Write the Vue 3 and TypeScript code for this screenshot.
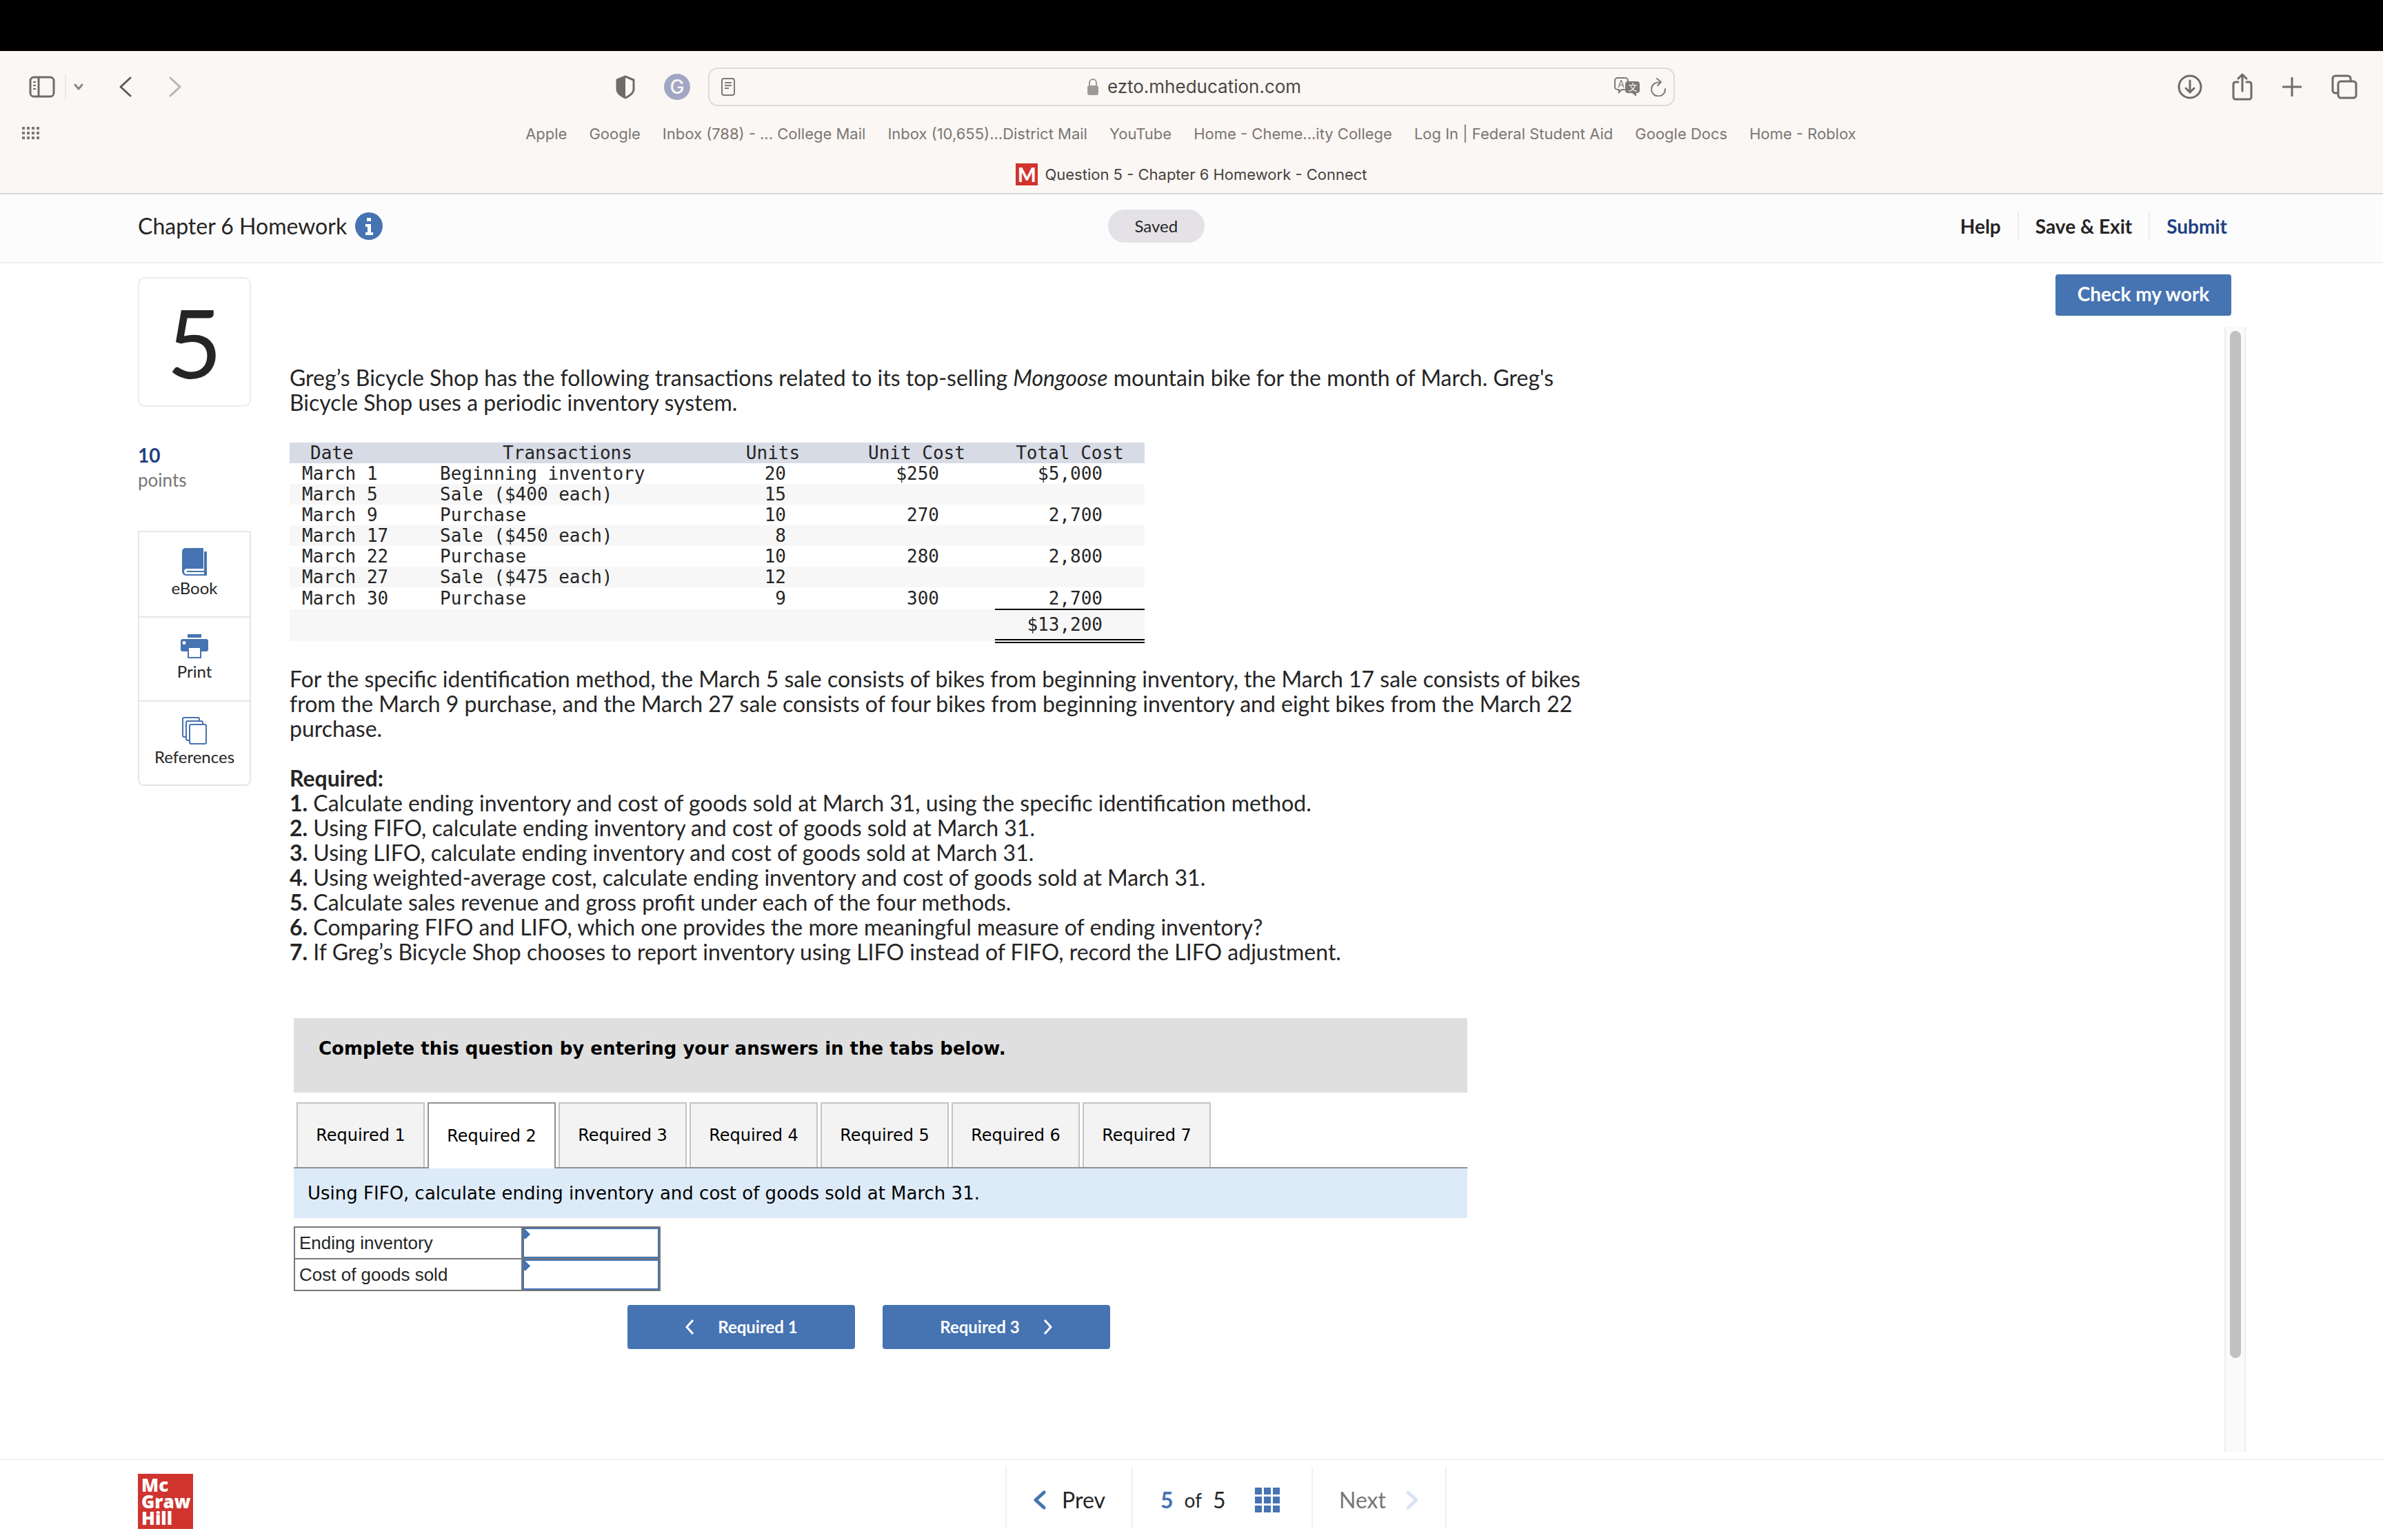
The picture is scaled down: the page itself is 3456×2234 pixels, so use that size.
<script setup lang="ts">
import { ref } from 'vue'

interface Transaction {
  date: string
  label: string
  units: string
  unitCost: string
  totalCost: string
}

const bookmarks: string[] = [
  'Apple',
  'Google',
  'Inbox (788) - ... College Mail',
  'Inbox (10,655)...District Mail',
  'YouTube',
  'Home - Cheme...ity College',
  'Log In | Federal Student Aid',
  'Google Docs',
  'Home - Roblox',
]

const transactions: Transaction[] = [
  { date: 'March 1', label: 'Beginning inventory', units: '20', unitCost: '$250', totalCost: '$5,000' },
  { date: 'March 5', label: 'Sale ($400 each)', units: '15', unitCost: '', totalCost: '' },
  { date: 'March 9', label: 'Purchase', units: '10', unitCost: '270', totalCost: '2,700' },
  { date: 'March 17', label: 'Sale ($450 each)', units: '8', unitCost: '', totalCost: '' },
  { date: 'March 22', label: 'Purchase', units: '10', unitCost: '280', totalCost: '2,800' },
  { date: 'March 27', label: 'Sale ($475 each)', units: '12', unitCost: '', totalCost: '' },
  { date: 'March 30', label: 'Purchase', units: '9', unitCost: '300', totalCost: '2,700' },
]

const requirements: string[] = [
  'Calculate ending inventory and cost of goods sold at March 31, using the specific identification method.',
  'Using FIFO, calculate ending inventory and cost of goods sold at March 31.',
  'Using LIFO, calculate ending inventory and cost of goods sold at March 31.',
  'Using weighted-average cost, calculate ending inventory and cost of goods sold at March 31.',
  'Calculate sales revenue and gross profit under each of the four methods.',
  'Comparing FIFO and LIFO, which one provides the more meaningful measure of ending inventory?',
  'If Greg’s Bicycle Shop chooses to report inventory using LIFO instead of FIFO, record the LIFO adjustment.',
]

const activeTab = ref(2)
const endingInventory = ref('')
const costOfGoods = ref('')
</script>

<template>
  <div class="screen">
    <div class="notch"></div>

    <header class="browser">
      <div class="toolbar">
        <div class="tools-left">
          <button class="icon-btn sidebar-btn" aria-label="Show sidebar">
            <svg width="38" height="32" viewBox="0 0 38 32" fill="none" stroke="#6f6b68" stroke-width="3">
              <rect x="2" y="2" width="34" height="28" rx="5" />
              <path d="M14 2v28" />
              <path d="M6 9h4M6 14h4M6 19h4" stroke-width="2" />
            </svg>
          </button>
          <button class="icon-btn menu-btn" aria-label="Tab groups">
            <svg width="14" height="10" viewBox="0 0 14 10" fill="none" stroke="#8a8683" stroke-width="3" stroke-linecap="round" stroke-linejoin="round"><path d="M2 2l5 6 5-6" /></svg>
          </button>
          <button class="icon-btn back-btn" aria-label="Back">
            <svg width="18" height="30" viewBox="0 0 18 30" fill="none" stroke="#5f5b58" stroke-width="3" stroke-linecap="round" stroke-linejoin="round"><path d="M16 2L2 15l14 13" /></svg>
          </button>
          <button class="icon-btn forward-btn" aria-label="Forward">
            <svg width="18" height="30" viewBox="0 0 18 30" fill="none" stroke="#b9b5b2" stroke-width="3" stroke-linecap="round" stroke-linejoin="round"><path d="M2 2l14 13L2 28" /></svg>
          </button>
          <button class="icon-btn shield-btn" aria-label="Privacy report">
            <svg width="28" height="34" viewBox="0 0 28 34">
              <path d="M14 2L26 7v14c0 5-6 9-12 12C8 30 2 26 2 21V7z" fill="none" stroke="#6f6b68" stroke-width="3" stroke-linejoin="round" />
              <path d="M14 1L1 6v15c0 6 7 10 13 13z" fill="#6f6b68" />
            </svg>
          </button>
          <button class="grammar-btn" aria-label="Grammar extension">G</button>
        </div>

        <div class="address">
          <svg width="20" height="26" viewBox="0 0 20 26" fill="none" stroke="#7d7976" stroke-width="2"><rect x="1" y="1" width="18" height="24" rx="3" /><path d="M5 7h10M5 11h10M5 15h6" /></svg>
          <div class="domain">
            <svg width="18" height="24" viewBox="0 0 18 24"><rect x="1" y="10" width="16" height="14" rx="3" fill="#9c9996" /><path d="M4 11V6a5 5 0 0 1 10 0v5" fill="none" stroke="#9c9996" stroke-width="2" /></svg>
            <span>ezto.mheducation.com</span>
          </div>
          <div class="address-actions">
            <svg width="38" height="28" viewBox="0 0 38 28">
              <path d="M5 1h11a4 4 0 0 1 4 4v9a4 4 0 0 1-4 4h-5l-4 4v-4H5a4 4 0 0 1-4-4V5a4 4 0 0 1 4-4z" fill="none" stroke="#7d7976" stroke-width="2" />
              <text x="10" y="15" font-size="14" text-anchor="middle" fill="#7d7976" font-family="Inter, sans-serif">A</text>
              <path d="M20 6h13a4 4 0 0 1 4 4v9a4 4 0 0 1-4 4h-1v5l-6-5h-6a4 4 0 0 1-4-4v-9a4 4 0 0 1 4-4z" fill="#7d7976" />
              <text x="27" y="19" font-size="13" text-anchor="middle" fill="#fbf7f4" font-family="'Noto Sans CJK SC', sans-serif">文</text>
            </svg>
            <svg width="24" height="28" viewBox="0 0 24 28" fill="none" stroke="#7d7976" stroke-width="2" stroke-linecap="round" stroke-linejoin="round"><path d="M15 8a10 10 0 1 0 7 9" /><path d="M10 2l6 5-5 5" /></svg>
          </div>
        </div>

        <div class="tools-right">
          <button class="icon-btn" aria-label="Downloads">
            <svg width="36" height="36" viewBox="0 0 36 36" fill="none" stroke="#6f6b68" stroke-width="3" stroke-linecap="round" stroke-linejoin="round"><circle cx="18" cy="18" r="16" /><path d="M18 9v17M12 20l6 6 6-6" /></svg>
          </button>
          <button class="icon-btn" aria-label="Share">
            <svg width="30" height="40" viewBox="0 0 30 40" fill="none" stroke="#6f6b68" stroke-width="3" stroke-linecap="round" stroke-linejoin="round"><path d="M9 13H5a3 3 0 0 0-3 3v19a3 3 0 0 0 3 3h20a3 3 0 0 0 3-3V16a3 3 0 0 0-3-3h-4" /><path d="M15 26V2M9 8l6-6 6 6" /></svg>
          </button>
          <button class="icon-btn" aria-label="New tab">
            <svg width="28" height="28" viewBox="0 0 28 28" fill="none" stroke="#6f6b68" stroke-width="3" stroke-linecap="round"><path d="M14 1v26M1 14h26" /></svg>
          </button>
          <button class="icon-btn" aria-label="Tab overview">
            <svg width="38" height="36" viewBox="0 0 38 36" fill="none" stroke="#6f6b68" stroke-width="3"><path d="M10 27H6a4 4 0 0 1-4-4V6a4 4 0 0 1 4-4h18a4 4 0 0 1 4 4v4" /><rect x="10" y="10" width="26" height="24" rx="4" /></svg>
          </button>
        </div>
      </div>

      <nav class="bookmarks">
        <button class="icon-btn apps" aria-label="Show favorites">
          <svg width="26" height="20" viewBox="0 0 26 20" fill="#7d7976">
            <template v-for="row in 3" :key="row">
              <rect v-for="col in 4" :key="col" :x="(col - 1) * 7" :y="(row - 1) * 7" width="4" height="4" />
            </template>
          </svg>
        </button>
        <div class="bookmark-list">
          <a v-for="name in bookmarks" :key="name" href="#">{{ name }}</a>
        </div>
      </nav>

      <div class="tab-title">
        <span class="favicon">M</span>
        <span>Question 5 - Chapter 6 Homework - Connect</span>
      </div>
    </header>

    <div class="app-header">
      <div class="title-group">
        <h1>Chapter 6 Homework</h1>
        <button class="icon-btn" aria-label="Assignment information">
          <svg width="40" height="40" viewBox="0 0 40 40"><circle cx="20" cy="20" r="20" fill="#4673b2" /><path d="M17 8h6v5h-6zM15 17h8v12h3v4H15v-4h3v-8h-3z" fill="#fff" /></svg>
        </button>
      </div>
      <div class="header-right">
        <span class="saved">Saved</span>
        <nav class="header-links">
          <a href="#">Help</a>
          <a href="#">Save &amp; Exit</a>
          <a href="#" class="submit">Submit</a>
        </nav>
      </div>
    </div>

    <main class="main">
      <aside class="side">
        <div class="number">5</div>
        <div class="points"><b>10</b><span>points</span></div>
        <div class="resources">
          <button>
            <svg width="36" height="40" viewBox="0 0 36 40" fill="#4673b2"><path d="M5 0h26v30H7a4 4 0 0 0 0 8h25V5h4v35H6a6 6 0 0 1-6-6V5a5 5 0 0 1 5-5z" /><path d="M7 33h25v2H7z" /></svg>
            <span>eBook</span>
          </button>
          <button>
            <svg width="40" height="36" viewBox="0 0 40 36" fill="#4673b2"><path d="M10 0h20v5H10z" /><path fill-rule="evenodd" d="M3 7h34a3 3 0 0 1 3 3v12a3 3 0 0 1-3 3h-7v10H10V25H3a3 3 0 0 1-3-3V10a3 3 0 0 1 3-3zm9 13v13h16V20zM5 10a2 2 0 1 0 0 5 2 2 0 0 0 0-5z" /></svg>
            <span>Print</span>
          </button>
          <button>
            <svg width="36" height="40" viewBox="0 0 36 40" fill="#fff" stroke="#4673b2" stroke-width="2"><rect x="1" y="1" width="24" height="28" rx="2" /><rect x="6" y="6" width="24" height="28" rx="2" /><rect x="11" y="11" width="24" height="28" rx="2" /></svg>
            <span>References</span>
          </button>
        </div>
      </aside>

      <div class="stage">
        <div class="check-row"><button class="check">Check my work</button></div>
        <div class="viewport">
          <article class="question">
            <p>
              Greg’s Bicycle Shop has the following transactions related to its top-selling <i>Mongoose</i> mountain bike for the month of March. Greg's Bicycle Shop uses a periodic inventory system.
            </p>

            <table class="ledger">
              <colgroup>
                <col class="c-date" /><col class="c-label" /><col class="c-units" /><col class="c-unit-cost" /><col class="c-total" />
              </colgroup>
              <thead>
                <tr><th class="date-head">Date</th><th>Transactions</th><th>Units</th><th>Unit Cost</th><th>Total Cost</th></tr>
              </thead>
              <tbody>
                <tr v-for="t in transactions" :key="t.date">
                  <td>{{ t.date }}</td>
                  <td>{{ t.label }}</td>
                  <td class="units">{{ t.units }}</td>
                  <td class="unit-cost">{{ t.unitCost }}</td>
                  <td class="total">{{ t.totalCost }}</td>
                </tr>
                <tr class="sum">
                  <td></td><td></td><td></td><td></td>
                  <td class="total">$13,200</td>
                </tr>
              </tbody>
            </table>

            <p>
              For the specific identification method, the March 5 sale consists of bikes from beginning inventory, the March 17 sale consists of bikes from the March 9 purchase, and the March 27 sale consists of four bikes from beginning inventory and eight bikes from the March 22 purchase.
            </p>

            <div class="required">
              <b>Required:</b>
              <div v-for="(text, i) in requirements" :key="i"><b>{{ i + 1 }}.</b> {{ text }}</div>
            </div>

            <section class="worksheet">
              <h2>Complete this question by entering your answers in the tabs below.</h2>
              <div class="tabs" role="tablist">
                <button
                  v-for="n in 7"
                  :key="n"
                  role="tab"
                  :aria-selected="n === activeTab"
                  :class="{ active: n === activeTab }"
                  @click="activeTab = n"
                >Required {{ n }}</button>
              </div>
              <div class="prompt">Using FIFO, calculate ending inventory and cost of goods sold at March 31.</div>
              <table class="answers">
                <tbody>
                  <tr>
                    <th><label for="ending">Ending inventory</label></th>
                    <td><input id="ending" v-model="endingInventory" type="text" /></td>
                  </tr>
                  <tr>
                    <th><label for="cogs">Cost of goods sold</label></th>
                    <td><input id="cogs" v-model="costOfGoods" type="text" /></td>
                  </tr>
                </tbody>
              </table>
              <div class="steps">
                <button>
                  <svg width="14" height="22" viewBox="0 0 14 22" fill="none" stroke="#fff" stroke-width="3"><path d="M12 1L3 11l9 10" /></svg>
                  <span>Required 1</span>
                </button>
                <button>
                  <span>Required 3</span>
                  <svg width="14" height="22" viewBox="0 0 14 22" fill="none" stroke="#fff" stroke-width="3"><path d="M2 1l9 10-9 10" /></svg>
                </button>
              </div>
            </section>
          </article>
          <div class="track"><div class="thumb"></div></div>
        </div>
      </div>
    </main>

    <footer class="footer">
      <div class="logo"><span>Mc</span><span>Graw</span><span>Hill</span></div>
      <nav class="pager">
        <button class="prev">
          <svg width="20" height="28" viewBox="0 0 20 28" fill="none" stroke="#4673b2" stroke-width="5" stroke-linecap="round" stroke-linejoin="round"><path d="M16 3L4 14l12 11" /></svg>
          <span>Prev</span>
        </button>
        <div class="position">
          <b>5</b><span class="of">of</span><span>5</span>
          <button class="icon-btn grid-btn" aria-label="Question list">
            <svg width="36" height="36" viewBox="0 0 36 36" fill="#4673b2">
              <template v-for="row in 3" :key="row">
                <rect v-for="col in 3" :key="col" :x="(col - 1) * 13" :y="(row - 1) * 13" width="10" height="10" />
              </template>
            </svg>
          </button>
        </div>
        <button class="next" disabled>
          <span>Next</span>
          <svg width="20" height="28" viewBox="0 0 20 28" fill="none" stroke="#dae4f1" stroke-width="5" stroke-linecap="round" stroke-linejoin="round"><path d="M4 3l12 11L4 25" /></svg>
        </button>
      </nav>
    </footer>
  </div>
</template>

<style>
body {
  background: #fff;
}
</style>

<style scoped>
* {
  box-sizing: border-box;
}

button {
  margin: 0;
  padding: 0;
  border: 0;
  background: none;
  color: inherit;
  font: inherit;
}

a {
  color: inherit;
  text-decoration: none;
}

svg {
  display: block;
  flex: none;
}

.screen {
  display: flex;
  flex-direction: column;
  min-height: 100vh;
  color: #252525;
  font-family: Lato, sans-serif;
  font-size: 32px;
  line-height: 36px;
}

.notch {
  height: 74px;
  background: #000;
}

/* Browser chrome */
.browser {
  border-bottom: 2px solid #dad7d5;
  background: #fbf7f4;
  font-family: Inter, sans-serif;
  font-size: 22px;
}

.toolbar {
  display: grid;
  grid-template-columns: 1fr minmax(0, 1402px) 1fr;
  align-items: center;
  padding-top: 24px;
}

.tools-left {
  display: flex;
  align-items: center;
  padding: 0 26px 0 42px;
}

.menu-btn {
  display: flex;
  align-items: center;
  height: 36px;
  margin-left: 14px;
  padding-left: 11px;
  border-left: 2px solid #ebe7e4;
}

.back-btn {
  margin-left: 52px;
}

.forward-btn {
  margin-left: 54px;
}

.shield-btn {
  margin-left: auto;
}

.grammar-btn {
  width: 38px;
  height: 38px;
  margin-left: 42px;
  border-radius: 50%;
  background: #a1a6c4;
  color: #fbf7f4;
  font-size: 28px;
  font-weight: 500;
  line-height: 38px;
  text-align: center;
}

.address {
  display: grid;
  grid-template-columns: 80px 1fr 80px;
  align-items: center;
  height: 56px;
  padding: 0 10px 0 17px;
  border: 2px solid #dfdbd8;
  border-radius: 14px;
}

.domain {
  display: flex;
  align-items: center;
  justify-content: center;
  gap: 12px;
  color: #4b4846;
  font-size: 26px;
}

.address-actions {
  display: flex;
  align-items: center;
  justify-content: flex-end;
  gap: 14px;
}

.tools-right {
  display: flex;
  align-items: center;
  justify-content: flex-end;
  gap: 43px;
  padding-right: 37px;
}

.bookmarks {
  display: flex;
  align-items: center;
  height: 80px;
  padding: 0 32px;
  color: #7a7673;
}

.bookmark-list {
  display: flex;
  flex: 1;
  justify-content: center;
  gap: 32px;
  padding-right: 28px;
}

.tab-title {
  display: flex;
  align-items: center;
  justify-content: center;
  gap: 10px;
  height: 46px;
  padding-bottom: 8px;
  color: #46423f;
}

.favicon {
  width: 32px;
  height: 32px;
  background: #d0342c;
  color: #fff;
  font-family: Lato, sans-serif;
  font-size: 28px;
  font-weight: 900;
  line-height: 32px;
  text-align: center;
}

/* Assignment header */
.app-header {
  display: grid;
  grid-template-columns: 13fr 15fr;
  align-items: center;
  height: 100px;
  padding: 0 226px 6px 200px;
  border-bottom: 2px solid #f0f0f0;
  background: #fcfcfc;
}

.title-group {
  display: flex;
  align-items: center;
  gap: 12px;
}

h1 {
  margin: 0;
  font-size: 32px;
  font-weight: 400;
}

.header-right {
  display: flex;
  align-items: center;
  justify-content: space-between;
}

.saved {
  width: 140px;
  border-radius: 24px;
  background: #e4e2e6;
  font-size: 24px;
  line-height: 48px;
  text-align: center;
}

.header-links {
  display: flex;
  font-size: 28px;
  font-weight: 700;
  line-height: 40px;
}

.header-links a + a {
  margin-left: 24px;
  padding-left: 24px;
  border-left: 2px solid #ebebeb;
}

.submit {
  color: #1f4080;
}

/* Page body */
.main {
  display: flex;
  flex: 1;
  gap: 56px;
  padding-left: 200px;
}

.side {
  width: 164px;
  padding-top: 20px;
}

.number {
  height: 188px;
  border: 2px solid #ececec;
  border-radius: 10px;
  font-size: 138px;
  line-height: 184px;
  text-align: center;
}

.points {
  display: flex;
  flex-direction: column;
  margin: 52px 0 56px;
  color: #767676;
  font-size: 26px;
}

.points b {
  color: #1f4080;
  font-size: 28px;
}

.resources {
  display: flex;
  flex-direction: column;
  border: 2px solid #e6e6e6;
  border-radius: 0 0 8px 8px;
}

.resources button {
  display: flex;
  flex-direction: column;
  align-items: center;
  justify-content: center;
  height: 122px;
  font-size: 24px;
}

.resources button + button {
  border-top: 2px solid #e6e6e6;
}

.stage {
  display: flex;
  flex: 1;
  flex-direction: column;
}

.check-row {
  display: flex;
  justify-content: flex-end;
  padding: 16px 220px 16px 0;
}

.check {
  width: 255px;
  height: 60px;
  padding-bottom: 4px;
  border-radius: 4px;
  background: #4673b2;
  color: #fff;
  font-size: 28px;
  font-weight: 700;
}

.viewport {
  display: flex;
  flex: 1;
  justify-content: space-between;
  padding: 0 199px 10px 0;
}

.question {
  max-width: 1880px;
  padding-top: 56px;
}

.question p {
  margin: 0;
}

.ledger {
  width: 1240px;
  margin: 40px 0 34px;
  border-collapse: collapse;
  table-layout: fixed;
  font-family: "DejaVu Sans Mono", monospace;
  font-size: 26px;
  line-height: 30px;
}

.c-date { width: 200px; }
.c-label { width: 406px; }
.c-units { width: 190px; }
.c-unit-cost { width: 227px; }
.c-total { width: 217px; }

.ledger th {
  padding: 0;
  background: #d7dbe5;
  font-weight: 400;
}

.ledger .date-head {
  padding-left: 30px;
  text-align: left;
}

.ledger td {
  height: 30px;
  padding: 0 0 0 18px;
}

.ledger tbody tr:nth-child(even) {
  background: #f7f7f7;
}

.ledger .units {
  padding-right: 76px;
  text-align: right;
}

.ledger .unit-cost {
  padding-right: 81px;
  text-align: right;
}

.ledger .total {
  padding-right: 61px;
  text-align: right;
}

.ledger tr:nth-last-child(2) td {
  height: 32px;
}

.ledger .sum td {
  height: 46px;
}

.ledger .sum .total {
  border-top: 2px solid #000;
  border-bottom: 6px double #000;
}

.required {
  margin-top: 36px;
}

/* Worksheet */
.worksheet {
  max-width: 1702px;
  margin: 78px 0 0 6px;
  color: #000;
  font-family: Verdana, "DejaVu Sans", sans-serif;
  font-size: 26px;
}

h2 {
  height: 108px;
  margin: 0;
  padding: 26px 36px;
  background: #dfdfdf;
  font-size: 26px;
  font-weight: 700;
}

.tabs {
  display: flex;
  gap: 4px;
  margin-top: 14px;
  padding-left: 4px;
  border-bottom: 2px solid #8f9191;
  font-size: 24px;
}

.tabs button {
  width: 186px;
  height: 94px;
  border: 2px solid #c3c3c3;
  border-bottom: 0;
  background: #f3f3f3;
}

.tabs .active {
  height: 96px;
  margin-bottom: -2px;
  border-color: #8f9191;
  background: #fff;
}

.prompt {
  padding: 18px 20px;
  background: #ddebf8;
}

.answers {
  margin-top: 12px;
  border-collapse: collapse;
  color: #252525;
  font-family: "Liberation Sans", sans-serif;
}

.answers th,
.answers td {
  height: 46px;
  padding: 0;
  border: 2px solid #777;
}

.answers th {
  width: 330px;
  padding-left: 6px;
  font-weight: 400;
  text-align: left;
}

.answers td {
  width: 200px;
  background: #fff;
}

.answers input {
  display: block;
  width: 198px;
  height: 44px;
  padding: 0 12px;
  border: 2px solid #4673b2;
  border-radius: 0;
  outline: 0;
  background: conic-gradient(from 225deg at 9px 7px, #4673b2 90deg, transparent 0) 0 0 / 9px 14px no-repeat;
  font: inherit;
}

.steps {
  display: flex;
  gap: 40px;
  margin: 20px 0 0 484px;
  font-family: Lato, sans-serif;
  font-size: 24px;
  font-weight: 700;
}

.steps button {
  display: flex;
  align-items: center;
  justify-content: center;
  gap: 34px;
  width: 330px;
  height: 64px;
  border-radius: 4px;
  background: #4673b2;
  color: #fff;
}

.track {
  width: 31px;
  padding: 6px 0;
  border: 2px solid #ededed;
  border-top: 0;
  border-bottom: 0;
  background: #fafafa;
}

.thumb {
  width: 16px;
  height: 92%;
  margin: 0 auto;
  border-radius: 8px;
  background: #c1c1c1;
}

/* Footer */
.footer {
  display: grid;
  grid-template-columns: 1fr auto 1fr;
  height: 118px;
  padding: 10px 100px 20px 200px;
  border-top: 2px solid #f0f0f0;
}

.logo {
  display: flex;
  flex-direction: column;
  width: 80px;
  height: 80px;
  margin-top: 10px;
  padding: 4px 5px;
  background: #cf342f;
  color: #fff;
  font-family: "Open Sans", sans-serif;
  font-size: 26px;
  font-weight: 800;
  line-height: 24px;
}

.pager {
  display: flex;
}

.pager > * {
  display: flex;
  align-items: center;
  border-left: 2px solid #f0f0f0;
}

.prev {
  width: 183px;
  gap: 22px;
  padding: 6px 0 0 38px;
}

.position {
  width: 261px;
  padding: 6px 0 0 40px;
}

.position b {
  color: #4673b2;
}

.of {
  margin: 0 16px;
  font-size: 28px;
}

.grid-btn {
  margin-left: 42px;
}

.next {
  width: 196px;
  gap: 28px;
  padding: 6px 0 0 38px;
  border-right: 2px solid #f0f0f0;
  color: #767676;
}
</style>
